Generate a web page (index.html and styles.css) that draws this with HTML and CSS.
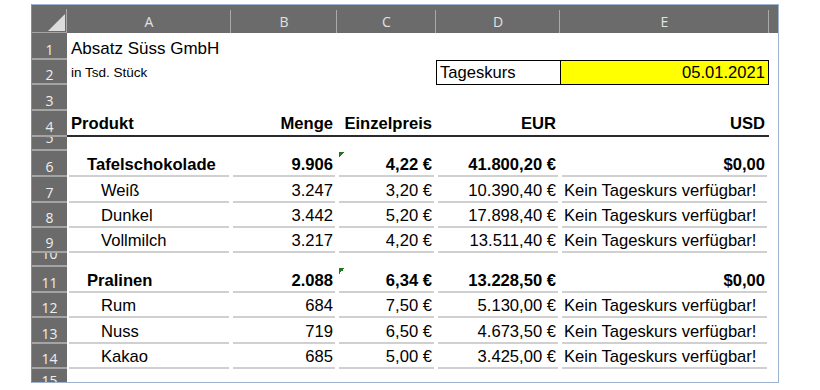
FILE: index.html
```html
<!DOCTYPE html>
<html lang="de">
<head>
<meta charset="utf-8">
<title>Absatz Süss GmbH</title>
<link rel="stylesheet" href="styles.css">
</head>
<body>
<div class="sheet">
  <div class="corner"><svg width="17" height="17" viewBox="0 0 17 17"><polygon points="17,0 17,17 0,17" fill="#dcdcdc"/></svg></div>
  <div class="ch">A</div><div class="ch">B</div><div class="ch">C</div><div class="ch">D</div><div class="ch">E</div><div class="ch last"></div>

  <div class="rh">1</div><div class="c title">Absatz Süss GmbH</div><div class="c"></div><div class="c"></div><div class="c"></div><div class="c"></div><div class="c"></div>

  <div class="rh">2</div><div class="c small">in Tsd. Stück</div><div class="c"></div><div class="c"></div><div class="c box-l">Tageskurs</div><div class="c r box-r">05.01.2021</div><div class="c"></div>

  <div class="rh">3</div><div class="c"></div><div class="c"></div><div class="c"></div><div class="c"></div><div class="c"></div><div class="c"></div>

  <div class="rh">4</div><div class="c b thick">Produkt</div><div class="c b r thick">Menge</div><div class="c b r thick">Einzelpreis</div><div class="c b r thick">EUR</div><div class="c b r thick">USD</div><div class="c"></div>

  <div class="rh short">5</div><div class="c"></div><div class="c"></div><div class="c"></div><div class="c"></div><div class="c"></div><div class="c"></div>

  <div class="rh">6</div><div class="c b i1 ln">Tafelschokolade</div><div class="c b r ln">9.906</div><div class="c b r ln flag">4,22 €</div><div class="c b r ln">41.800,20 €</div><div class="c b r ln">$0,00</div><div class="c"></div>

  <div class="rh">7</div><div class="c i2 ln">Weiß</div><div class="c r ln">3.247</div><div class="c r ln">3,20 €</div><div class="c r ln">10.390,40 €</div><div class="c ln">Kein Tageskurs verfügbar!</div><div class="c"></div>

  <div class="rh">8</div><div class="c i2 ln">Dunkel</div><div class="c r ln">3.442</div><div class="c r ln">5,20 €</div><div class="c r ln">17.898,40 €</div><div class="c ln">Kein Tageskurs verfügbar!</div><div class="c"></div>

  <div class="rh">9</div><div class="c i2 ln">Vollmilch</div><div class="c r ln">3.217</div><div class="c r ln">4,20 €</div><div class="c r ln">13.511,40 €</div><div class="c ln">Kein Tageskurs verfügbar!</div><div class="c"></div>

  <div class="rh short">10</div><div class="c"></div><div class="c"></div><div class="c"></div><div class="c"></div><div class="c"></div><div class="c"></div>

  <div class="rh">11</div><div class="c b i1 ln">Pralinen</div><div class="c b r ln">2.088</div><div class="c b r ln flag">6,34 €</div><div class="c b r ln">13.228,50 €</div><div class="c b r ln">$0,00</div><div class="c"></div>

  <div class="rh">12</div><div class="c i2 ln">Rum</div><div class="c r ln">684</div><div class="c r ln">7,50 €</div><div class="c r ln">5.130,00 €</div><div class="c ln">Kein Tageskurs verfügbar!</div><div class="c"></div>

  <div class="rh">13</div><div class="c i2 ln">Nuss</div><div class="c r ln">719</div><div class="c r ln">6,50 €</div><div class="c r ln">4.673,50 €</div><div class="c ln">Kein Tageskurs verfügbar!</div><div class="c"></div>

  <div class="rh">14</div><div class="c i2 ln">Kakao</div><div class="c r ln">685</div><div class="c r ln">5,00 €</div><div class="c r ln">3.425,00 €</div><div class="c ln">Kein Tageskurs verfügbar!</div><div class="c"></div>

  <div class="rh top">15</div><div class="c"></div><div class="c"></div><div class="c"></div><div class="c"></div><div class="c"></div><div class="c"></div>
</div>
</body>
</html>
```

FILE: styles.css
```css
* { box-sizing: border-box; }

html, body {
  margin: 0;
  padding: 0;
  background: #ffffff;
}

.sheet {
  display: grid;
  grid-template-columns: 35px 164px 106px 99px 124px 209px 9px;
  grid-template-rows: 28px 27px 25px 26px 26px 14px 26px 26px 25px 25px 14px 26px 25px 26px 25px 13px;
  width: max-content;
  margin: 4px 0 0 31px;
  border: 1px solid #9cb4cf;
  border-left-color: #7d8fa3;
  background: #ffffff;
  font-family: "Liberation Sans", Arial, sans-serif;
  font-size: 16.6px;
  color: #000000;
}

/* column headers */
.corner,
.ch {
  display: flex;
  justify-content: center;
  align-items: flex-end;
  background-color: #6b6b6b;
  background-image: linear-gradient(#a9a9a9, #a9a9a9);
  background-size: 1px 23px;
  background-position: right bottom;
  background-repeat: no-repeat;
  color: #e2e2e2;
  font-family: "Open Sans", "Noto Sans", sans-serif;
  font-size: 14px;
  line-height: 14px;
  padding-bottom: 4px;
}

.corner {
  justify-content: flex-end;
  padding: 0 2px 1px 0;
  border-bottom: 1px solid #a4a4a4;
}

.corner svg { display: block; }

.ch.last { background-image: none; }

/* row headers */
.rh {
  display: flex;
  justify-content: center;
  align-items: flex-end;
  overflow: hidden;
  background-color: #6b6b6b;
  color: #efefef;
  font-family: "Open Sans", "Noto Sans", sans-serif;
  font-size: 14px;
  line-height: 14px;
  padding-bottom: 1.5px;
  border-bottom: 2px solid #a4a4a4;
}

.rh.short { padding-bottom: 4.5px; }

.rh.top {
  align-items: flex-start;
  padding: 5px 0 0;
  border-bottom: none;
}

/* cells */
.c {
  display: flex;
  align-items: flex-end;
  min-width: 0;
  overflow: hidden;
  white-space: nowrap;
  line-height: 19px;
  padding: 0 4px 3.5px;
}

.r { justify-content: flex-end; }
.b { font-weight: bold; }
.i1 { padding-left: 20px; }
.i2 { padding-left: 34px; }

.title {
  font-size: 17px;
  padding-bottom: 2px;
}

.small {
  font-size: 13.5px;
  padding-bottom: 3px;
}

.thick {
  border-bottom: 2px solid #2b2b2b;
  padding-bottom: 2px;
}

.ln {
  background-image: linear-gradient(#d0d0d0, #d0d0d0);
  background-size: calc(100% - 4px) 2px;
  background-position: center bottom;
  background-repeat: no-repeat;
}

.flag {
  background-image: linear-gradient(135deg, #1f7a1f 50%, transparent 50%), linear-gradient(#d0d0d0, #d0d0d0);
  background-size: 6px 6px, calc(100% - 4px) 2px;
  background-position: left 2px top 1px, center bottom;
  background-repeat: no-repeat;
}

.box-l {
  border: 1px solid #000000;
  border-right: none;
  padding: 0 3px 2px;
}

.box-r {
  border: 1px solid #000000;
  background: #ffff00;
  padding: 0 3px 2px;
}
```
